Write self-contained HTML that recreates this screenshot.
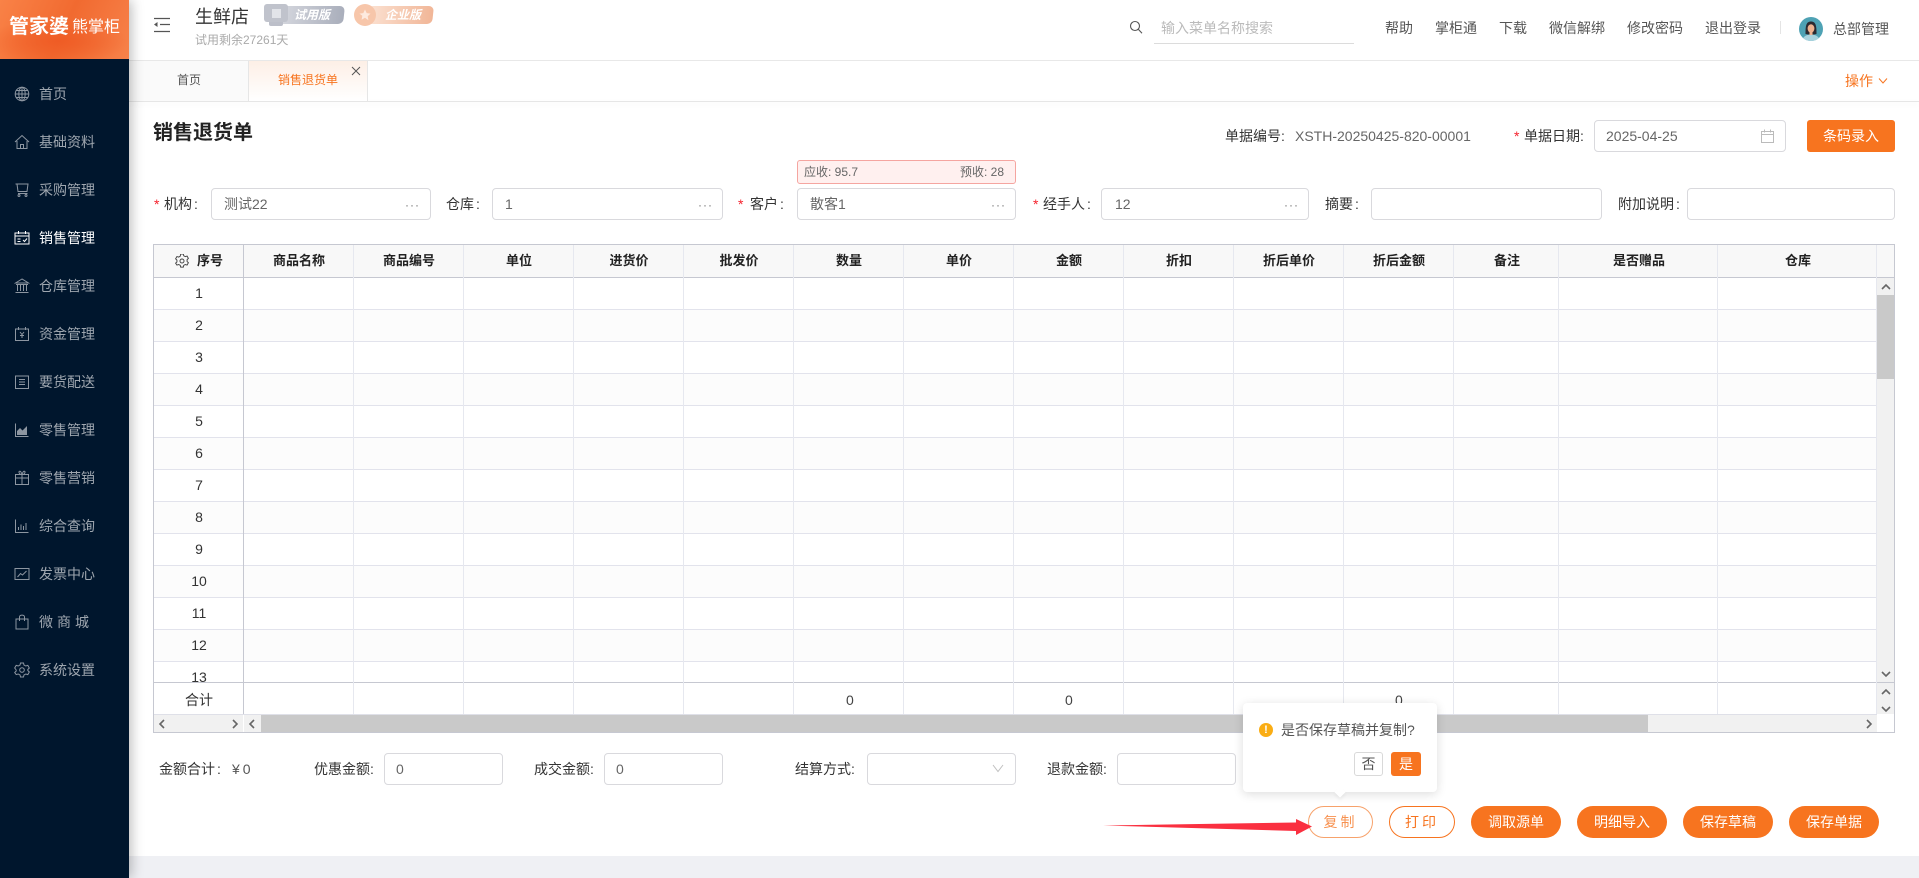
<!DOCTYPE html>
<html lang="zh-CN">
<head>
<meta charset="utf-8">
<title>销售退货单</title>
<style>
*{box-sizing:border-box}
html,body{margin:0;padding:0;width:1919px;height:878px;overflow:hidden;background:#fff;font-family:"Liberation Sans","Noto Sans CJK SC",sans-serif;color:#333}
div,span,svg{position:absolute}
b.c{font-weight:normal;margin-left:2px}
.t{white-space:nowrap;line-height:20px;height:20px;font-size:14px}
.m{left:39px;color:#9ea6af;font-size:14px}
.ic{left:14px;width:16px;height:16px;fill:none;stroke:#8d96a1;stroke-width:1}
.lnk{top:18px;color:#555;font-size:14px}
.lb{color:#333}
.r{color:#f5222d;font-size:14px}
.in{top:188px;height:32px;border:1px solid #d9d9dd;border-radius:4px;background:#fff}
.v{color:#666}
.d{color:#777;top:198px;font-size:12px;letter-spacing:1px;line-height:14px;height:14px;white-space:nowrap}
.th{top:251px;font-weight:bold;font-size:13px;color:#222;text-align:center;transform:translateX(-50%)}
.vl{width:1px;top:245px;height:469px;background:#e6e8ef}
.n{left:0;width:92px;text-align:center;font-size:14px;line-height:20px;height:20px;color:#333}
.b{top:806px;height:32px;border-radius:16px;background:#f7741f;color:#fff;font-size:14px;line-height:32px;text-align:center}
.o{background:#fff;color:#f7741f;border:1px solid #f7741f;line-height:30px;letter-spacing:3px}
.ch{fill:none;stroke:#666;stroke-width:1.6}
</style>
</head>
<body>
<!-- main bg bottom -->
<div style="left:129px;top:856px;width:1790px;height:22px;background:#eff0f4"></div>

<!-- topbar lines -->
<div style="left:129px;top:60px;width:1790px;height:1px;background:#e8e8e8"></div>
<div style="left:129px;top:101px;width:1790px;height:1px;background:#e6e6e6;box-shadow:0 2px 6px rgba(0,0,0,.08)"></div>

<!-- tabs -->
<div style="left:129px;top:61px;width:120px;height:40px;background:#fafafa;border-right:1px solid #e6e6e6"></div>
<div class="t" style="left:177px;top:70px;font-size:12px;color:#555">首页</div>
<div style="left:249px;top:61px;width:119px;height:40px;background:linear-gradient(#fdefe6,#fff);border-right:1px solid #e6e6e6"></div>
<div class="t" style="left:278px;top:70px;font-size:12px;color:#f7741f">销售退货单</div>
<svg style="left:351px;top:66px;width:10px;height:10px" viewBox="0 0 10 10"><path d="M1 1l8 8M9 1l-8 8" stroke="#555" stroke-width="1" fill="none"/></svg>

<!-- header left -->
<svg style="left:154px;top:17px;width:16px;height:16px" viewBox="0 0 16 16"><path d="M0 1.500h16M6 7.500h10M0 14.500h16" stroke="#555" stroke-width="1.200" fill="none"/><path d="M0 7.500l3.500-2.500v5z" fill="#555"/></svg>
<div class="t" style="left:195px;top:4px;font-size:18px;line-height:26px;height:26px;color:#333">生鲜店</div>
<div class="t" style="left:195px;top:30px;font-size:12px;color:#aaa">试用剩余27261天</div>

<div style="left:280px;top:6px;width:64px;height:18px;background:linear-gradient(90deg,#d5d7de,#a9aebb);border-radius:2px 5px 5px 2px;transform:skewX(-6deg)"></div>
<div style="left:264px;top:4px;width:24px;height:18px;background:#c0c3cc;border-radius:3px"></div>
<div style="left:272px;top:9px;width:9px;height:9px;background:#e2e4e9"></div>
<div style="left:269px;top:22px;width:14px;height:4px;background:#bcbfc9;border-radius:0 0 2px 2px"></div>
<div class="t" style="left:294px;top:5px;font-size:12px;font-weight:bold;font-style:italic;color:#fff">试用版</div>

<div style="left:370px;top:6px;width:63px;height:18px;background:linear-gradient(90deg,#fbe0d0,#f1b697);border-radius:2px 5px 5px 2px;transform:skewX(-6deg)"></div>
<div style="left:354px;top:4px;width:22px;height:22px;background:#f7c6aa;border-radius:50%"></div>
<svg style="left:359px;top:9px;width:12px;height:12px" viewBox="0 0 12 12"><path d="M6 .5l1.700 3.600 3.800.5-2.800 2.700.7 3.900L6 8.800l-3.400 1.900.7-3.900L.5 4.600l3.800-.5z" fill="#fdeadf"/></svg>
<div class="t" style="left:385px;top:5px;font-size:12px;font-weight:bold;font-style:italic;color:#fff">企业版</div>

<!-- header right -->
<svg style="left:1129px;top:20px;width:14px;height:14px" viewBox="0 0 14 14"><circle cx="6" cy="6" r="4.500" fill="none" stroke="#555" stroke-width="1.100"/><path d="M9.400 9.400l3.600 3.800" stroke="#555" stroke-width="1.100"/></svg>
<div class="t" style="left:1161px;top:18px;color:#bbb">输入菜单名称搜索</div>
<div style="left:1154px;top:43px;width:200px;height:1px;background:#dcdcdc"></div>
<div class="t lnk" style="left:1385px">帮助</div>
<div class="t lnk" style="left:1435px">掌柜通</div>
<div class="t lnk" style="left:1499px">下载</div>
<div class="t lnk" style="left:1549px">微信解绑</div>
<div class="t lnk" style="left:1627px">修改密码</div>
<div class="t lnk" style="left:1705px">退出登录</div>
<div style="left:1780px;top:21px;width:1px;height:13px;background:#e4e4e4"></div>
<svg style="left:1799px;top:17px;width:24px;height:24px" viewBox="0 0 24 24"><defs><clipPath id="av"><circle cx="12" cy="12" r="12"/></clipPath></defs><g clip-path="url(#av)"><rect width="24" height="24" fill="#4ea2b4"/><path d="M3 24c1-5 5-6.500 9-6.500s8 1.500 9 6.500z" fill="#a9d3de"/><path d="M6.500 17c0-8 .5-12.500 5.500-12.500S17.500 9 17.500 17l-2.500.5H9z" fill="#2c2a30"/><ellipse cx="12" cy="11.500" rx="3.400" ry="4.300" fill="#eeb28f"/><rect x="10.500" y="14.500" width="3" height="3.500" fill="#eeb28f"/></g></svg>
<div class="t" style="left:1833px;top:19px;color:#555">总部管理</div>
<div class="t" style="left:1845px;top:71px;color:#f7741f">操作</div>
<svg style="left:1878px;top:77px;width:10px;height:8px" viewBox="0 0 10 8"><path d="M1 1.500l4 4.500 4-4.500" fill="none" stroke="#f7741f" stroke-width="1"/></svg>

<!-- title + top form -->
<div class="t" style="left:153px;top:119px;font-size:20px;line-height:28px;height:28px;font-weight:bold;color:#222">销售退货单</div>
<div class="t lb" style="left:1225px;top:126px">单据编号:</div>
<div class="t v" style="left:1295px;top:126px">XSTH-20250425-820-00001</div>
<div class="t r" style="left:1514px;top:126px">*</div>
<div class="t lb" style="left:1524px;top:126px">单据日期:</div>
<div class="in" style="left:1594px;top:120px;width:192px"></div>
<div class="t v" style="left:1606px;top:126px">2025-04-25</div>
<svg style="left:1761px;top:129px;width:13px;height:14px" viewBox="0 0 13 14"><path d="M.5 2.500h12v11H.5zM.5 5.500h12M3.500.5v3M9.500.5v3" fill="none" stroke="#bbb"/></svg>
<div class="b" style="left:1807px;top:120px;width:88px;border-radius:3px">条码录入</div>

<!-- credit box -->
<div style="left:797px;top:160px;width:219px;height:24px;background:#fff0ef;border:1px solid #f5a5a0;border-radius:3px"></div>
<div class="t" style="left:804px;top:162px;font-size:12px;color:#666">应收: 95.7</div>
<div class="t" style="left:960px;top:162px;font-size:12px;color:#666">预收: 28</div>

<!-- form row -->
<div class="t r" style="left:154px;top:194px">*</div><div class="t lb" style="left:164px;top:194px">机构<b class="c">:</b></div>
<div class="in" style="left:211px;width:220px"></div><div class="t v" style="left:224px;top:194px">测试22</div><div class="d" style="left:405px">···</div>
<div class="t lb" style="left:446px;top:194px">仓库<b class="c">:</b></div>
<div class="in" style="left:492px;width:231px"></div><div class="t v" style="left:505px;top:194px">1</div><div class="d" style="left:698px">···</div>
<div class="t r" style="left:738px;top:194px">*</div><div class="t lb" style="left:750px;top:194px">客户<b class="c">:</b></div>
<div class="in" style="left:797px;width:219px"></div><div class="t v" style="left:810px;top:194px">散客1</div><div class="d" style="left:991px">···</div>
<div class="t r" style="left:1033px;top:194px">*</div><div class="t lb" style="left:1043px;top:194px">经手人<b class="c">:</b></div>
<div class="in" style="left:1101px;width:208px"></div><div class="t v" style="left:1115px;top:194px">12</div><div class="d" style="left:1284px">···</div>
<div class="t lb" style="left:1325px;top:194px">摘要<b class="c">:</b></div>
<div class="in" style="left:1371px;width:231px"></div>
<div class="t lb" style="left:1618px;top:194px">附加说明<b class="c">:</b></div>
<div class="in" style="left:1687px;width:208px"></div>

<!-- table -->
<div style="left:153px;top:244px;width:1742px;height:34px;background:#f8f8f8;border:1px solid #c6c8d1"></div>
<div style="left:153px;top:278px;width:1724px;height:404px;overflow:hidden;background:repeating-linear-gradient(#fff 0,#fff 31px,#e2e3ec 31px,#e2e3ec 32px,#fcfcfc 32px,#fcfcfc 63px,#e2e3ec 63px,#e2e3ec 64px)">
<div class="n" style="top:5px">1</div>
<div class="n" style="top:37px">2</div>
<div class="n" style="top:69px">3</div>
<div class="n" style="top:101px">4</div>
<div class="n" style="top:133px">5</div>
<div class="n" style="top:165px">6</div>
<div class="n" style="top:197px">7</div>
<div class="n" style="top:229px">8</div>
<div class="n" style="top:261px">9</div>
<div class="n" style="top:293px">10</div>
<div class="n" style="top:325px">11</div>
<div class="n" style="top:357px">12</div>
<div class="n" style="top:389px">13</div>
</div>
<div style="left:153px;top:682px;width:1742px;height:1px;background:#c6c8d1"></div>
<div style="left:153px;top:714px;width:1724px;height:1px;background:#dfe0e8"></div>
<div style="left:153px;top:244px;width:1px;height:489px;background:#c6c8d1"></div>
<div style="left:1894px;top:244px;width:1px;height:489px;background:#c6c8d1"></div>
<div style="left:153px;top:732px;width:1742px;height:1px;background:#c6c8d1"></div>

<div class="vl" style="left:243px;background:#c6c8d1"></div>
<div class="vl" style="left:353px"></div><div class="vl" style="left:463px"></div><div class="vl" style="left:573px"></div>
<div class="vl" style="left:683px"></div><div class="vl" style="left:793px"></div><div class="vl" style="left:903px"></div>
<div class="vl" style="left:1013px"></div><div class="vl" style="left:1123px"></div><div class="vl" style="left:1233px"></div>
<div class="vl" style="left:1343px"></div><div class="vl" style="left:1453px"></div><div class="vl" style="left:1558px"></div>
<div class="vl" style="left:1717px"></div><div class="vl" style="left:1876px"></div>

<svg style="left:175px;top:254px;width:14px;height:14px" viewBox="0 0 16 16"><path d="M6.500 1h3l.5 2 1.800 1 2-.6 1.500 2.600-1.500 1.500v2l1.500 1.500-1.500 2.600-2-.6-1.800 1-.5 2h-3l-.5-2-1.800-1-2 .6L.7 11.500 2.200 10V8L.7 6.500 2.200 3.900l2 .6L6 3.500z" fill="none" stroke="#444" stroke-width="1.100" transform="translate(0 -1)"/><circle cx="8" cy="8" r="2.300" fill="none" stroke="#444" stroke-width="1.100"/></svg>
<div class="t" style="left:197px;top:251px;font-size:13px;font-weight:bold;color:#222">序号</div>
<div class="t th" style="left:299px">商品名称</div>
<div class="t th" style="left:409px">商品编号</div>
<div class="t th" style="left:519px">单位</div>
<div class="t th" style="left:629px">进货价</div>
<div class="t th" style="left:739px">批发价</div>
<div class="t th" style="left:849px">数量</div>
<div class="t th" style="left:959px">单价</div>
<div class="t th" style="left:1069px">金额</div>
<div class="t th" style="left:1179px">折扣</div>
<div class="t th" style="left:1289px">折后单价</div>
<div class="t th" style="left:1399px">折后金额</div>
<div class="t th" style="left:1507px">备注</div>
<div class="t th" style="left:1639px">是否赠品</div>
<div class="t th" style="left:1798px">仓库</div>

<!-- summary -->
<div class="t" style="left:153px;width:92px;top:690px;text-align:center;color:#333">合计</div>
<div class="t" style="left:846px;top:690px;color:#444">0</div>
<div class="t" style="left:1065px;top:690px;color:#444">0</div>
<div class="t" style="left:1395px;top:690px;color:#444">0</div>

<!-- v scroll -->
<div style="left:1877px;top:278px;width:17px;height:404px;background:#f1f1f1"></div>
<div style="left:1877px;top:295px;width:17px;height:84px;background:#c9c9c9"></div>
<svg class="ch" style="left:1881px;top:283px;width:10px;height:7px" viewBox="0 0 10 7"><path d="M1 6l4-4 4 4"/></svg>
<svg class="ch" style="left:1881px;top:671px;width:10px;height:7px" viewBox="0 0 10 7"><path d="M1 1l4 4 4-4"/></svg>
<div style="left:1877px;top:683px;width:17px;height:31px;background:#f1f1f1"></div>
<svg class="ch" style="left:1881px;top:688px;width:10px;height:7px" viewBox="0 0 10 7"><path d="M1 6l4-4 4 4"/></svg>
<svg class="ch" style="left:1881px;top:706px;width:10px;height:7px" viewBox="0 0 10 7"><path d="M1 1l4 4 4-4"/></svg>

<!-- h scroll -->
<div style="left:154px;top:715px;width:89px;height:17px;background:#f1f1f1"></div>
<div style="left:244px;top:715px;width:1633px;height:17px;background:#f1f1f1"></div>
<div style="left:261px;top:715px;width:1387px;height:17px;background:#c9c9c9"></div>
<svg class="ch" style="left:158px;top:719px;width:7px;height:10px" viewBox="0 0 7 10"><path d="M6 1L2 5l4 4"/></svg>
<svg class="ch" style="left:232px;top:719px;width:7px;height:10px" viewBox="0 0 7 10"><path d="M1 1l4 4-4 4"/></svg>
<svg class="ch" style="left:248px;top:719px;width:7px;height:10px" viewBox="0 0 7 10"><path d="M6 1L2 5l4 4"/></svg>
<svg class="ch" style="left:1866px;top:719px;width:7px;height:10px" viewBox="0 0 7 10"><path d="M1 1l4 4-4 4"/></svg>

<!-- footer form -->
<div class="t lb" style="left:159px;top:759px">金额合计<b class="c">:</b></div>
<div class="t lb" style="left:232px;top:759px;color:#555;letter-spacing:3px">¥0</div>
<div class="t lb" style="left:314px;top:759px">优惠金额:</div>
<div class="in" style="left:384px;top:753px;width:119px"></div><div class="t v" style="left:396px;top:759px">0</div>
<div class="t lb" style="left:534px;top:759px">成交金额:</div>
<div class="in" style="left:604px;top:753px;width:119px"></div><div class="t v" style="left:616px;top:759px">0</div>
<div class="t lb" style="left:795px;top:759px">结算方式:</div>
<div class="in" style="left:867px;top:753px;width:149px"></div>
<svg style="left:992px;top:764px;width:12px;height:9px" viewBox="0 0 12 9"><path d="M1 1l5 6.500L11 1" fill="none" stroke="#c0c0c0"/></svg>
<div class="t lb" style="left:1047px;top:759px">退款金额:</div>
<div class="in" style="left:1117px;top:753px;width:119px"></div>

<!-- buttons -->
<div class="b o" style="left:1308px;width:65px;color:#f7914f;border-color:#f7a26b">复制</div>
<div class="b o" style="left:1389px;width:66px">打印</div>
<div class="b" style="left:1471px;width:90px">调取源单</div>
<div class="b" style="left:1577px;width:90px">明细导入</div>
<div class="b" style="left:1683px;width:90px">保存草稿</div>
<div class="b" style="left:1789px;width:90px">保存单据</div>

<!-- popover -->
<div style="left:1243px;top:703px;width:194px;height:89px;background:#fff;border-radius:4px;box-shadow:0 2px 10px rgba(0,0,0,.14)"></div>
<div style="left:1336px;top:788px;width:8px;height:8px;background:#fff;transform:rotate(45deg);box-shadow:2px 2px 3px rgba(0,0,0,.05)"></div>
<div style="left:1259px;top:723px;width:14px;height:14px;border-radius:50%;background:#faad14;color:#fff;font-size:11px;line-height:14px;text-align:center;font-weight:bold">!</div>
<div class="t" style="left:1281px;top:720px;color:#555">是否保存草稿并复制?</div>
<div style="left:1354px;top:752px;width:29px;height:24px;background:#fff;border:1px solid #d9d9d9;border-radius:3px;font-size:14px;line-height:22px;text-align:center;color:#555">否</div>
<div style="left:1391px;top:752px;width:30px;height:24px;background:#f7741f;border-radius:3px;font-size:14px;line-height:24px;text-align:center;color:#fff">是</div>

<!-- red arrow -->
<svg style="left:1100px;top:815px;width:215px;height:24px" viewBox="0 0 215 24"><path d="M3 10.500l193-3V4l16 7.500-16 8.500v-4z" fill="#fa3040"/></svg>

<!-- sidebar -->
<div style="left:0;top:0;width:129px;height:878px;background:#00162d;box-shadow:2px 0 12px rgba(0,0,0,.28)"></div>
<div style="left:0;top:0;width:129px;height:59px;background:radial-gradient(ellipse 70px 24px at 45% 70%,#ef5c25 0%,rgba(239,92,37,0) 100%),linear-gradient(115deg,#f98247 0%,#f16a30 50%,#f7824a 100%);overflow:hidden"></div>
<div class="t" style="left:9px;top:14px;height:26px;line-height:26px;font-size:20px;font-weight:bold;color:#fff">管家婆</div>
<div class="t" style="left:72px;top:16px;height:24px;line-height:24px;font-size:16px;color:#fff">熊掌柜</div>

<svg class="ic" style="top:86px" viewBox="0 0 16 16"><circle cx="8" cy="8" r="6.800"/><ellipse cx="8" cy="8" rx="3.200" ry="6.800"/><path d="M1.200 8h13.600M2.200 4.500h11.600M2.200 11.500h11.600M8 1.200v13.600"/></svg>
<div class="t m" style="top:84px">首页</div>
<svg class="ic" style="top:134px" viewBox="0 0 16 16"><path d="M1 8l7-6.500L15 8M3 7v7.500h10V7M6.500 14.500v-4h3v4"/></svg>
<div class="t m" style="top:132px">基础资料</div>
<svg class="ic" style="top:182px" viewBox="0 0 16 16"><path d="M1.500 2h12.500l-1 7.500H4L3 2M4 11.500h9.500"/><circle cx="5" cy="13.500" r="1"/><circle cx="12" cy="13.500" r="1"/></svg>
<div class="t m" style="top:180px">采购管理</div>
<svg class="ic" style="top:230px;stroke:#fff" viewBox="0 0 16 16"><path d="M1 3h14v11H1zM1 6h14M4.500 1v3M11.500 1v3M3.500 9h3M3.500 11.500h3M9 10l1.500 1.500L13 8.500"/></svg>
<div class="t m" style="top:228px;color:#fff">销售管理</div>
<svg class="ic" style="top:278px" viewBox="0 0 16 16"><path d="M8 1L1.500 5h13zM2 6.500h12M3.500 7v6M6.500 7v6M9.500 7v6M12.500 7v6M1.500 14.500h13"/></svg>
<div class="t m" style="top:276px">仓库管理</div>
<svg class="ic" style="top:326px" viewBox="0 0 16 16"><path d="M1.500 3h13v11.500h-13zM4.500 1v3M11.500 1v3M6 6l2 2.500L10 6M8 8.500V12M6 9.500h4"/></svg>
<div class="t m" style="top:324px">资金管理</div>
<svg class="ic" style="top:374px" viewBox="0 0 16 16"><path d="M1.500 2h13v12.500h-13zM5 5.500h6M5 8h6M5 10.500h6"/></svg>
<div class="t m" style="top:372px">要货配送</div>
<svg class="ic" style="top:422px" viewBox="0 0 16 16"><path d="M1.500 1.500v13h13"/><path d="M3 13V9l3-3 2.500 2.500L13 4v9z" fill="#8d96a1" stroke="none"/></svg>
<div class="t m" style="top:420px">零售管理</div>
<svg class="ic" style="top:470px" viewBox="0 0 16 16"><path d="M1.500 4.500h13v10h-13zM1.500 8h13M8 4.500v10M8 4.500C5 4.500 4 1 6 1.200c1 .1 2 3.300 2 3.300s1-3.200 2-3.300c2-.2 1 3.300-2 3.300"/></svg>
<div class="t m" style="top:468px">零售营销</div>
<svg class="ic" style="top:518px" viewBox="0 0 16 16"><path d="M1.500 1.500v13h13M4.500 12V9M7 12V6.500M9.500 12V8M12 12V5"/></svg>
<div class="t m" style="top:516px">综合查询</div>
<svg class="ic" style="top:566px" viewBox="0 0 16 16"><path d="M1 2.500h14v11H1zM3.500 11l3-3.500 2 1.500 4-4"/></svg>
<div class="t m" style="top:564px">发票中心</div>
<svg class="ic" style="top:614px" viewBox="0 0 16 16"><path d="M2 5h12v10H2zM5.500 7V3c0-2.500 5-2.500 5 0v4"/></svg>
<div class="t m" style="top:612px;letter-spacing:4px">微商城</div>
<svg class="ic" style="top:662px" viewBox="0 0 16 16"><path d="M6.500 1h3l.5 2 1.800 1 2-.6 1.500 2.600-1.500 1.500v1l1.500 1.500-1.500 2.600-2-.6-1.800 1-.5 2h-3l-.5-2-1.800-1-2 .6L.7 10.500 2.200 9V8L.7 6 2.200 3.400l2 .6L6 3z"/><circle cx="8" cy="8" r="2.300"/></svg>
<div class="t m" style="top:660px">系统设置</div>
</body>
</html>
